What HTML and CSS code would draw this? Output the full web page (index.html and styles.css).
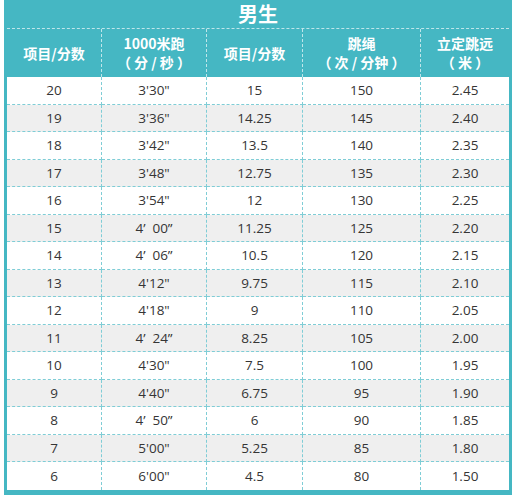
FILE: index.html
```html
<!DOCTYPE html>
<html lang="zh">
<head>
<meta charset="utf-8">
<link rel="stylesheet" href="styles.css">
</head>
<body>
<div class="frame">
  <div class="title">男生</div>
  <div class="grid">
    <div class="hd">项目/分数</div>
    <div class="hd">1000米跑<br>（ 分 / 秒 ）</div>
    <div class="hd">项目/分数</div>
    <div class="hd">跳绳<br>（ 次 / 分钟 ）</div>
    <div class="hd">立定跳远<br>（ 米 ）</div>

    <div class="c">20</div><div class="c">3'30"</div><div class="c">15</div><div class="c">150</div><div class="c">2.45</div>
    <div class="c g">19</div><div class="c g">3'36"</div><div class="c g">14.25</div><div class="c g">145</div><div class="c g">2.40</div>
    <div class="c">18</div><div class="c">3'42"</div><div class="c">13.5</div><div class="c">140</div><div class="c">2.35</div>
    <div class="c g">17</div><div class="c g">3'48"</div><div class="c g">12.75</div><div class="c g">135</div><div class="c g">2.30</div>
    <div class="c">16</div><div class="c">3'54"</div><div class="c">12</div><div class="c">130</div><div class="c">2.25</div>
    <div class="c g">15</div><div class="c g">4’&nbsp;&nbsp;00”</div><div class="c g">11.25</div><div class="c g">125</div><div class="c g">2.20</div>
    <div class="c">14</div><div class="c">4’&nbsp;&nbsp;06”</div><div class="c">10.5</div><div class="c">120</div><div class="c">2.15</div>
    <div class="c g">13</div><div class="c g">4'12"</div><div class="c g">9.75</div><div class="c g">115</div><div class="c g">2.10</div>
    <div class="c">12</div><div class="c">4'18"</div><div class="c">9</div><div class="c">110</div><div class="c">2.05</div>
    <div class="c g">11</div><div class="c g">4’&nbsp;&nbsp;24”</div><div class="c g">8.25</div><div class="c g">105</div><div class="c g">2.00</div>
    <div class="c">10</div><div class="c">4'30"</div><div class="c">7.5</div><div class="c">100</div><div class="c">1.95</div>
    <div class="c g">9</div><div class="c g">4'40"</div><div class="c g">6.75</div><div class="c g">95</div><div class="c g">1.90</div>
    <div class="c">8</div><div class="c">4’&nbsp;&nbsp;50”</div><div class="c">6</div><div class="c">90</div><div class="c">1.85</div>
    <div class="c g">7</div><div class="c g">5'00"</div><div class="c g">5.25</div><div class="c g">85</div><div class="c g">1.80</div>
    <div class="c">6</div><div class="c">6'00"</div><div class="c">4.5</div><div class="c">80</div><div class="c">1.50</div>
  </div>
</div>
</body>
</html>
```

FILE: styles.css
```css
html, body {
  margin: 0;
  padding: 0;
  background: #ffffff;
}
body {
  font-family: "Open Sans", "Noto Sans CJK SC", sans-serif;
  color: #353535;
}
.frame {
  margin-left: 4px;
  width: 502px;
  background: #45b7c3;
  padding: 0 3px 5px 3px;
}
.title {
  height: 29px;
  box-sizing: border-box;
  border-bottom: 1px dashed #bfe6ea;
  color: #ffffff;
  font-weight: 700;
  font-size: 20px;
  line-height: 28px;
  text-align: center;
  font-family: "Noto Sans CJK SC", sans-serif;
}
.grid {
  display: grid;
  grid-template-columns: 95px 105px 96px 118px 88px;
  grid-template-rows: 48px repeat(15, 27.53px);
}
.hd {
  display: flex;
  align-items: center;
  justify-content: center;
  text-align: center;
  color: #ffffff;
  font-weight: 700;
  font-size: 14px;
  line-height: 19px;
  font-family: "Noto Sans CJK SC", sans-serif;
  border-right: 1px dashed #bfe6ea;
  box-sizing: border-box;
}
.hd:nth-child(5) {
  border-right: none;
}
.c {
  display: flex;
  align-items: center;
  justify-content: center;
  background: #ffffff;
  font-size: 13.5px;
  border-right: 1px dashed #7fcdd6;
  border-bottom: 1px dashed #7fcdd6;
  box-sizing: border-box;
}
.c:nth-child(5n) {
  border-right: none;
}
.c.g {
  background: #efefef;
}
.grid .c:nth-last-child(-n+5) {
  border-bottom: none;
}
```
